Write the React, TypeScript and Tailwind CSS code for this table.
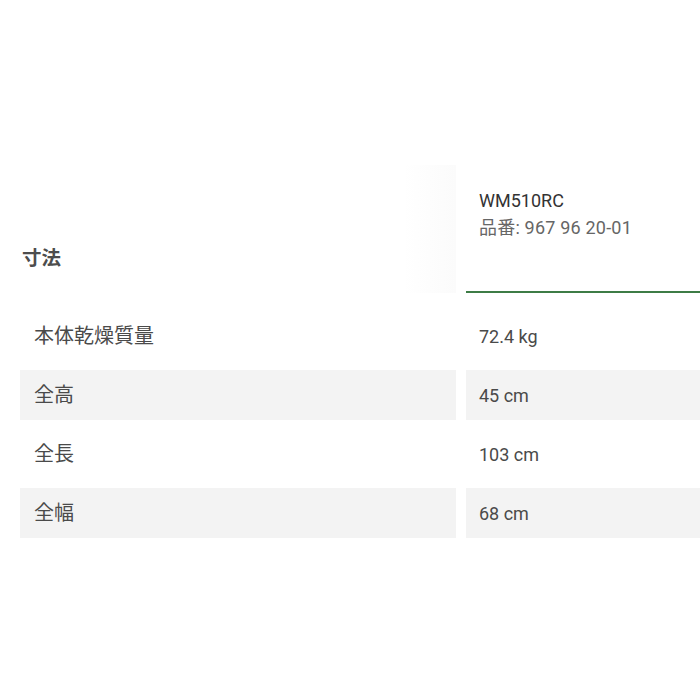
import React from "react";

const rows = [
  { label: "本体乾燥質量", value: "72.4 kg" },
  { label: "全高", value: "45 cm" },
  { label: "全長", value: "103 cm" },
  { label: "全幅", value: "68 cm" },
];

export default function App() {
  return (
    <div
      className="w-[700px] h-[700px] overflow-hidden bg-white text-[#444]"
      style={{ fontFamily: 'Roboto, "Noto Sans CJK JP", sans-serif' }}
    >
      <div className="pt-[165px] pl-[20px] w-[1000px]">
        {/* header */}
        <div className="flex gap-[10px] h-[128px]">
          <div className="w-[436px] flex items-center pt-[58px] bg-gradient-to-r from-white from-88% to-[#fbfbfb]">
            <span className="pl-[2px] text-[19.5px] font-bold text-[#4d4d4d] leading-[27px]">
              寸法
            </span>
          </div>
          <div className="w-[300px] border-b-2 border-[#3d7c46] pt-[22px] pl-[13px] text-[18px] leading-[27px]">
            <div className="text-[#333]">WM510RC</div>
            <div className="text-[#666] tracking-[0.2px]">品番: 967 96 20-01</div>
          </div>
        </div>

        {/* rows */}
        <div className="flex flex-col gap-[9px] pt-[18px]">
          {rows.map((row, i) => (
            <div key={row.label} className="flex gap-[10px] h-[50px]">
              <div
                className={`w-[436px] flex items-center pl-[14px] text-[20px] text-[#4a4a4a] ${
                  i % 2 === 1 ? "bg-[#f3f3f3]" : ""
                }`}
              >
                {row.label}
              </div>
              <div
                className={`w-[300px] flex items-center pl-[13px] text-[18px] text-[#4a4a4a] ${
                  i % 2 === 1 ? "bg-[#f3f3f3]" : ""
                }`}
              >
                {row.value}
              </div>
            </div>
          ))}
        </div>
      </div>
    </div>
  );
}
